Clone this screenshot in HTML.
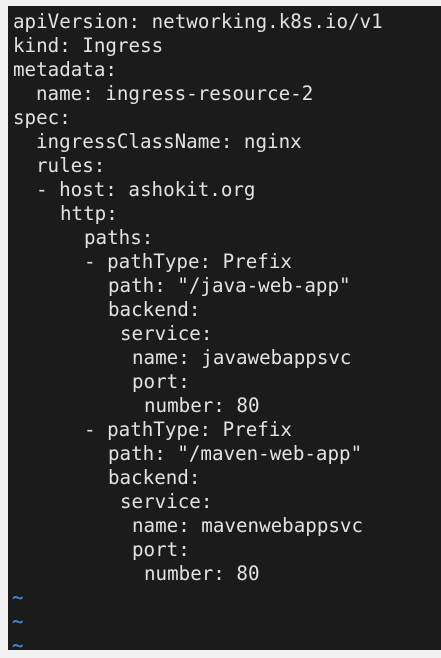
<!DOCTYPE html>
<html><head><meta charset="utf-8"><style>
html,body{margin:0;padding:0;width:441px;height:650px;overflow:hidden;background:#f2f2f2}
#t{position:absolute;left:8px;top:6px;width:433px;height:644px;background:#1b1b1b}
.l{position:absolute;font-family:"DejaVu Sans Mono","Liberation Mono",monospace;font-size:19.2px;color:#e2e2e2;white-space:pre;line-height:24px}
.tl{color:#3d7fc9;font-weight:bold}
</style></head><body>
<div id="t"></div>
<div class="l" style="left:13px;top:10px">apiVersion: networking.k8s.io/v1</div>
<div class="l" style="left:13px;top:34px">kind: Ingress</div>
<div class="l" style="left:13px;top:58px">metadata:</div>
<div class="l" style="left:36px;top:82px">name: ingress-resource-2</div>
<div class="l" style="left:13px;top:106px">spec:</div>
<div class="l" style="left:36px;top:130px">ingressClassName: nginx</div>
<div class="l" style="left:36px;top:154px">rules:</div>
<div class="l" style="left:36px;top:178px">- host: ashokit.org</div>
<div class="l" style="left:60px;top:202px">http:</div>
<div class="l" style="left:84px;top:226px">paths:</div>
<div class="l" style="left:84px;top:250px">- pathType: Prefix</div>
<div class="l" style="left:108px;top:274px">path: "/java-web-app"</div>
<div class="l" style="left:108px;top:298px">backend:</div>
<div class="l" style="left:120px;top:322px">service:</div>
<div class="l" style="left:132px;top:346px">name: javawebappsvc</div>
<div class="l" style="left:132px;top:370px">port:</div>
<div class="l" style="left:144px;top:394px">number: 80</div>
<div class="l" style="left:84px;top:418px">- pathType: Prefix</div>
<div class="l" style="left:108px;top:442px">path: "/maven-web-app"</div>
<div class="l" style="left:108px;top:466px">backend:</div>
<div class="l" style="left:120px;top:490px">service:</div>
<div class="l" style="left:132px;top:514px">name: mavenwebappsvc</div>
<div class="l" style="left:132px;top:538px">port:</div>
<div class="l" style="left:144px;top:562px">number: 80</div>
<div class="l tl" style="left:12px;top:586px">~</div>
<div class="l tl" style="left:12px;top:610px">~</div>
<div class="l tl" style="left:12px;top:634px">~</div>
</body></html>
